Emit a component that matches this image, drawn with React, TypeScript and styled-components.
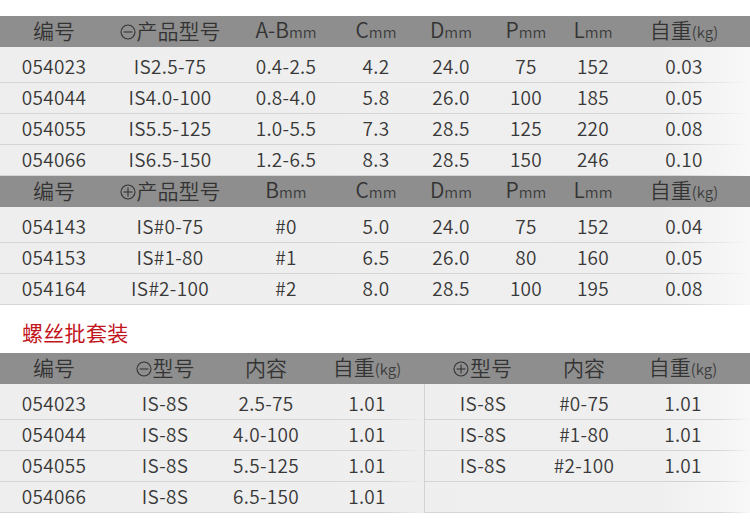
import { FC, ReactNode } from 'react';
import styled, { createGlobalStyle } from 'styled-components';

const GlobalStyle = createGlobalStyle`
  html, body {
    margin: 0;
    padding: 0;
    background: #fff;
  }
  body {
    font-family: "Noto Sans CJK SC", "Noto Sans", sans-serif;
    color: #333;
  }
`;

const SPEC_COLS = '108px 124px 108px 72px 78px 72px 62px 120px 1fr';
const SET_COLS = '108px 114px 88px 114px 117px 86px 112px 1fr';
const SET_LEFT = '108px 114px 88px 114px';
const SET_RIGHT = '116px 86px 112px 1fr';

const Page = styled.div`
  width: 750px;
  padding-top: 16px;
  display: flex;
  flex-direction: column;
`;

const HeaderRow = styled.div<{ $cols: string }>`
  display: grid;
  grid-template-columns: ${(p) => p.$cols};
  box-sizing: border-box;
  height: 31px;
  padding-bottom: 4px;
  align-items: center;
  background: #8e8e8e;
  color: #333;
  font-size: 21px;
  font-weight: 350;
  line-height: 27px;
`;

const HeadCell = styled.div`
  text-align: center;
  white-space: nowrap;
`;

const Unit = styled.span`
  font-size: 15px;
  color: #3a3a3a;
`;

const Body = styled.div`
  padding-top: 5px;
  background: linear-gradient(to right, #eeeeee 0%, #efefef 88%, #f8f8f8 100%);
`;

const SplitBody = styled.div`
  display: flex;
  background: linear-gradient(to right, #eeeeee 0%, #efefef 88%, #f8f8f8 100%);
`;

const Part = styled.div<{ $divider?: boolean }>`
  padding-top: 5px;
  flex: ${(p) => (p.$divider ? '1' : '0 0 424px')};
  border-left: ${(p) => (p.$divider ? '1px solid #d2d2d2' : 'none')};
`;

const Row = styled.div<{ $cols: string }>`
  display: grid;
  grid-template-columns: ${(p) => p.$cols};
  box-sizing: border-box;
  height: 31px;
  padding-bottom: 3px;
  align-items: center;
  border-bottom: 1px solid transparent;
  border-image: linear-gradient(to right, #d4d4d4 0%, #d4d4d4 90%, rgba(212, 212, 212, 0) 100%) 1;
  font-size: 19px;
  font-weight: 350;
  line-height: 26px;
  letter-spacing: 0.3px;
  color: #383838;
`;

const Cell = styled.div`
  text-align: center;
  white-space: nowrap;
`;

const Title = styled.div`
  height: 48px;
  box-sizing: border-box;
  padding: 16px 0 0 22px;
  font-size: 21px;
  font-weight: 400;
  line-height: 22px;
  color: #c2161d;
  letter-spacing: 0.3px;
`;

const SlotIcon = styled.svg`
  width: 16px;
  height: 16px;
  margin-right: 1px;
  vertical-align: -1px;
`;

const Slot: FC<{ cross?: boolean }> = ({ cross }) => (
  <SlotIcon viewBox="0 0 16 16">
    <circle cx="8" cy="8" r="7" fill="none" stroke="#333" strokeWidth="1.1" />
    <line x1="3.6" y1="8" x2="12.4" y2="8" stroke="#333" strokeWidth="1.1" />
    {cross && <line x1="8" y1="3.6" x2="8" y2="12.4" stroke="#333" strokeWidth="1.1" />}
  </SlotIcon>
);

const mm = (label: string): ReactNode => (
  <>
    {label}
    <Unit>mm</Unit>
  </>
);

const weight: ReactNode = (
  <>
    自重<Unit>(kg)</Unit>
  </>
);

const specHead = (cross: boolean): ReactNode[] => [
  '编号',
  <>
    <Slot cross={cross} />
    产品型号
  </>,
  mm(cross ? 'B' : 'A-B'),
  mm('C'),
  mm('D'),
  mm('P'),
  mm('L'),
  weight,
];

const flatRows = [
  ['054023', 'IS2.5-75', '0.4-2.5', '4.2', '24.0', '75', '152', '0.03'],
  ['054044', 'IS4.0-100', '0.8-4.0', '5.8', '26.0', '100', '185', '0.05'],
  ['054055', 'IS5.5-125', '1.0-5.5', '7.3', '28.5', '125', '220', '0.08'],
  ['054066', 'IS6.5-150', '1.2-6.5', '8.3', '28.5', '150', '246', '0.10'],
];

const crossRows = [
  ['054143', 'IS#0-75', '#0', '5.0', '24.0', '75', '152', '0.04'],
  ['054153', 'IS#1-80', '#1', '6.5', '26.0', '80', '160', '0.05'],
  ['054164', 'IS#2-100', '#2', '8.0', '28.5', '100', '195', '0.08'],
];

const setLeft = [
  ['054023', 'IS-8S', '2.5-75', '1.01'],
  ['054044', 'IS-8S', '4.0-100', '1.01'],
  ['054055', 'IS-8S', '5.5-125', '1.01'],
  ['054066', 'IS-8S', '6.5-150', '1.01'],
];

const setRight = [
  ['IS-8S', '#0-75', '1.01'],
  ['IS-8S', '#1-80', '1.01'],
  ['IS-8S', '#2-100', '1.01'],
  [],
];

const Rows: FC<{ cols: string; data: string[][] }> = ({ cols, data }) => (
  <>
    {data.map((r, i) => (
      <Row $cols={cols} key={i}>
        {r.map((v, j) => (
          <Cell key={j}>{v}</Cell>
        ))}
      </Row>
    ))}
  </>
);

const SpecTable: FC<{ cross: boolean; data: string[][] }> = ({ cross, data }) => (
  <>
    <HeaderRow $cols={SPEC_COLS}>
      {specHead(cross).map((h, i) => (
        <HeadCell key={i}>{h}</HeadCell>
      ))}
    </HeaderRow>
    <Body>
      <Rows cols={SPEC_COLS} data={data} />
    </Body>
  </>
);

export default function App() {
  const setHead: ReactNode[] = [
    '编号',
    <>
      <Slot />
      型号
    </>,
    '内容',
    weight,
    <>
      <Slot cross />
      型号
    </>,
    '内容',
    weight,
  ];

  return (
    <>
      <GlobalStyle />
      <Page>
        <SpecTable cross={false} data={flatRows} />
        <SpecTable cross data={crossRows} />
        <Title>螺丝批套装</Title>
        <HeaderRow $cols={SET_COLS}>
          {setHead.map((h, i) => (
            <HeadCell key={i}>{h}</HeadCell>
          ))}
        </HeaderRow>
        <SplitBody>
          <Part>
            <Rows cols={SET_LEFT} data={setLeft} />
          </Part>
          <Part $divider>
            <Rows cols={SET_RIGHT} data={setRight} />
          </Part>
        </SplitBody>
      </Page>
    </>
  );
}
